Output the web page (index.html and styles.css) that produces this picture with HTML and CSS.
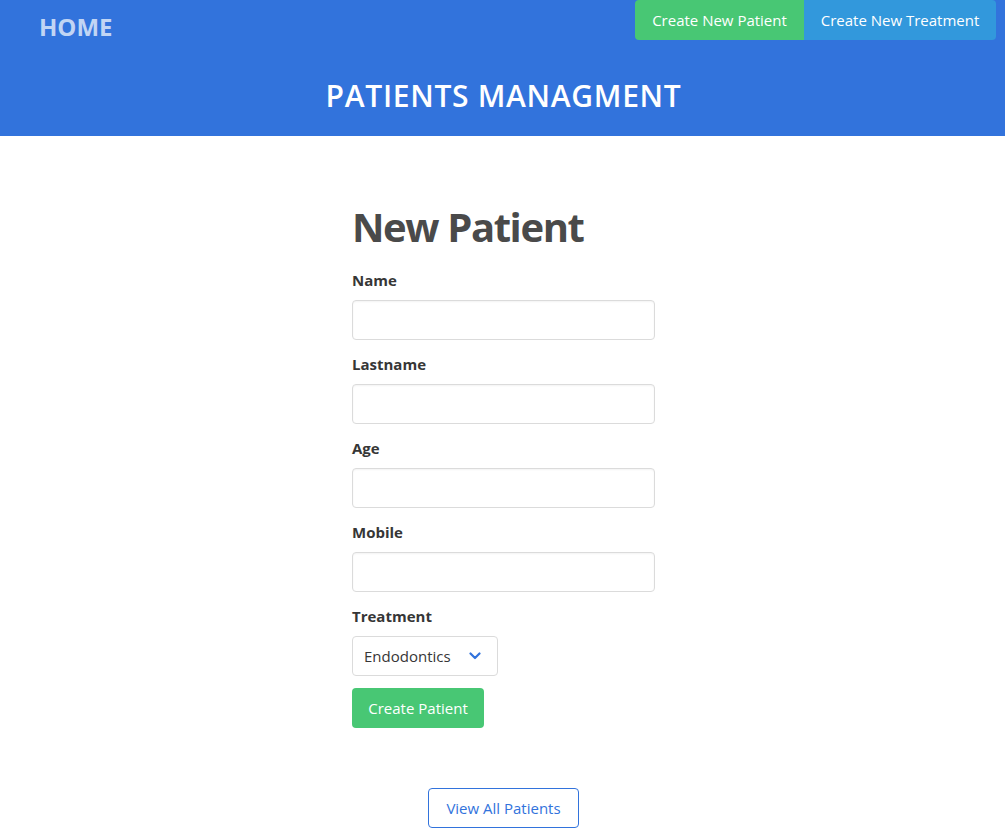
FILE: index.html
```html
<!DOCTYPE html>
<html lang="en">
<head>
<meta charset="utf-8">
<title>Patients Managment</title>
<link rel="stylesheet" href="styles.css">
</head>
<body>
<header class="hero">
  <div class="topbar">
    <a class="home" href="#">HOME</a>
    <div class="nav-buttons">
      <a class="btn btn-success btn-left" href="#">Create New Patient</a>
      <a class="btn btn-info btn-right" href="#">Create New Treatment</a>
    </div>
  </div>
  <h1 class="hero-title">PATIENTS MANAGMENT</h1>
</header>
<main class="content">
  <form class="patient-form">
    <h2 class="form-title">New Patient</h2>
    <div class="field">
      <label class="label">Name</label>
      <input class="input" type="text">
    </div>
    <div class="field">
      <label class="label">Lastname</label>
      <input class="input" type="text">
    </div>
    <div class="field">
      <label class="label">Age</label>
      <input class="input" type="text">
    </div>
    <div class="field">
      <label class="label">Mobile</label>
      <input class="input" type="text">
    </div>
    <div class="field">
      <label class="label">Treatment</label>
      <div class="select">
        <span class="select-value">Endodontics</span>
        <svg class="chevron" width="12" height="8" viewBox="0 0 12 8"><path d="M1.5 1.5 L6 6 L10.5 1.5" fill="none" stroke="#3273dc" stroke-width="2.2" stroke-linecap="round" stroke-linejoin="round"/></svg>
      </div>
    </div>
    <button class="btn btn-success submit" type="button">Create Patient</button>
  </form>
  <div class="footer-actions">
    <a class="btn btn-outline" href="#">View All Patients</a>
  </div>
</main>
</body>
</html>
```
FILE: styles.css
```css
* { box-sizing: border-box; }
html, body { margin: 0; padding: 0; }
body {
  font-family: "Open Sans", "Noto Sans", sans-serif;
  font-size: 16px;
  color: #4a4a4a;
  background: #fff;
}
a { text-decoration: none; }

.hero {
  background: #3273dc;
  height: 136px;
  display: flex;
  flex-direction: column;
}
.topbar {
  display: flex;
  justify-content: space-between;
  align-items: flex-start;
  padding: 0 9px 0 40px;
  height: 82px;
}
.home {
  color: #c1d5f4;
  font-weight: 700;
  font-size: 24px;
  line-height: 24px;
  padding-top: 15px;
  margin-left: -1px;
}
.nav-buttons { display: flex; }
.btn {
  display: inline-flex;
  align-items: center;
  justify-content: center;
  height: 40px;
  font-family: inherit;
  font-size: 15px;
  border: 1px solid transparent;
  border-radius: 4px;
  color: #fff;
  cursor: pointer;
}
.btn-success { background: #48c774; }
.btn-info { background: #3298dc; }
.btn-left { width: 169px; border-radius: 4px 0 0 4px; }
.btn-right { width: 192px; border-radius: 0 4px 4px 0; }

.hero-title {
  margin: 0;
  padding-left: 2px;
  text-align: center;
  color: #fff;
  font-weight: 600;
  font-size: 30px;
  line-height: 28px;
  letter-spacing: 0.7px;
}

.content {
  display: flex;
  flex-direction: column;
  align-items: center;
  padding-top: 67px;
  padding-left: 2px;
}
.patient-form {
  width: 303px;
  display: flex;
  flex-direction: column;
  align-items: flex-start;
}
.form-title {
  margin: 0 0 18px;
  font-size: 40px;
  line-height: 47px;
  font-weight: 700;
  letter-spacing: -1.4px;
  color: #4a4a4a;
}
.field {
  width: 100%;
  margin-bottom: 12px;
}
.label {
  display: block;
  color: #363636;
  font-weight: 700;
  font-size: 15px;
  line-height: 24px;
  margin-bottom: 8px;
}
.input {
  display: block;
  width: 100%;
  height: 40px;
  border: 1px solid #dbdbdb;
  border-radius: 4px;
  box-shadow: inset 0 0.0625em 0.125em rgba(10,10,10,0.05);
  font-family: inherit;
  font-size: 16px;
  padding: 0 11px;
}
.select {
  width: 146px;
  height: 40px;
  border: 1px solid #dbdbdb;
  border-radius: 4px;
  display: flex;
  align-items: center;
  justify-content: space-between;
  padding: 0 16px 0 11px;
  color: #363636;
  font-size: 15px;
}
.submit {
  width: 132px;
  font-size: 15px;
}
.footer-actions {
  margin-top: 60px;
  display: flex;
  justify-content: center;
}
.btn-outline {
  width: 151px;
  background: #fff;
  border-color: #3273dc;
  color: #3273dc;
}
```
